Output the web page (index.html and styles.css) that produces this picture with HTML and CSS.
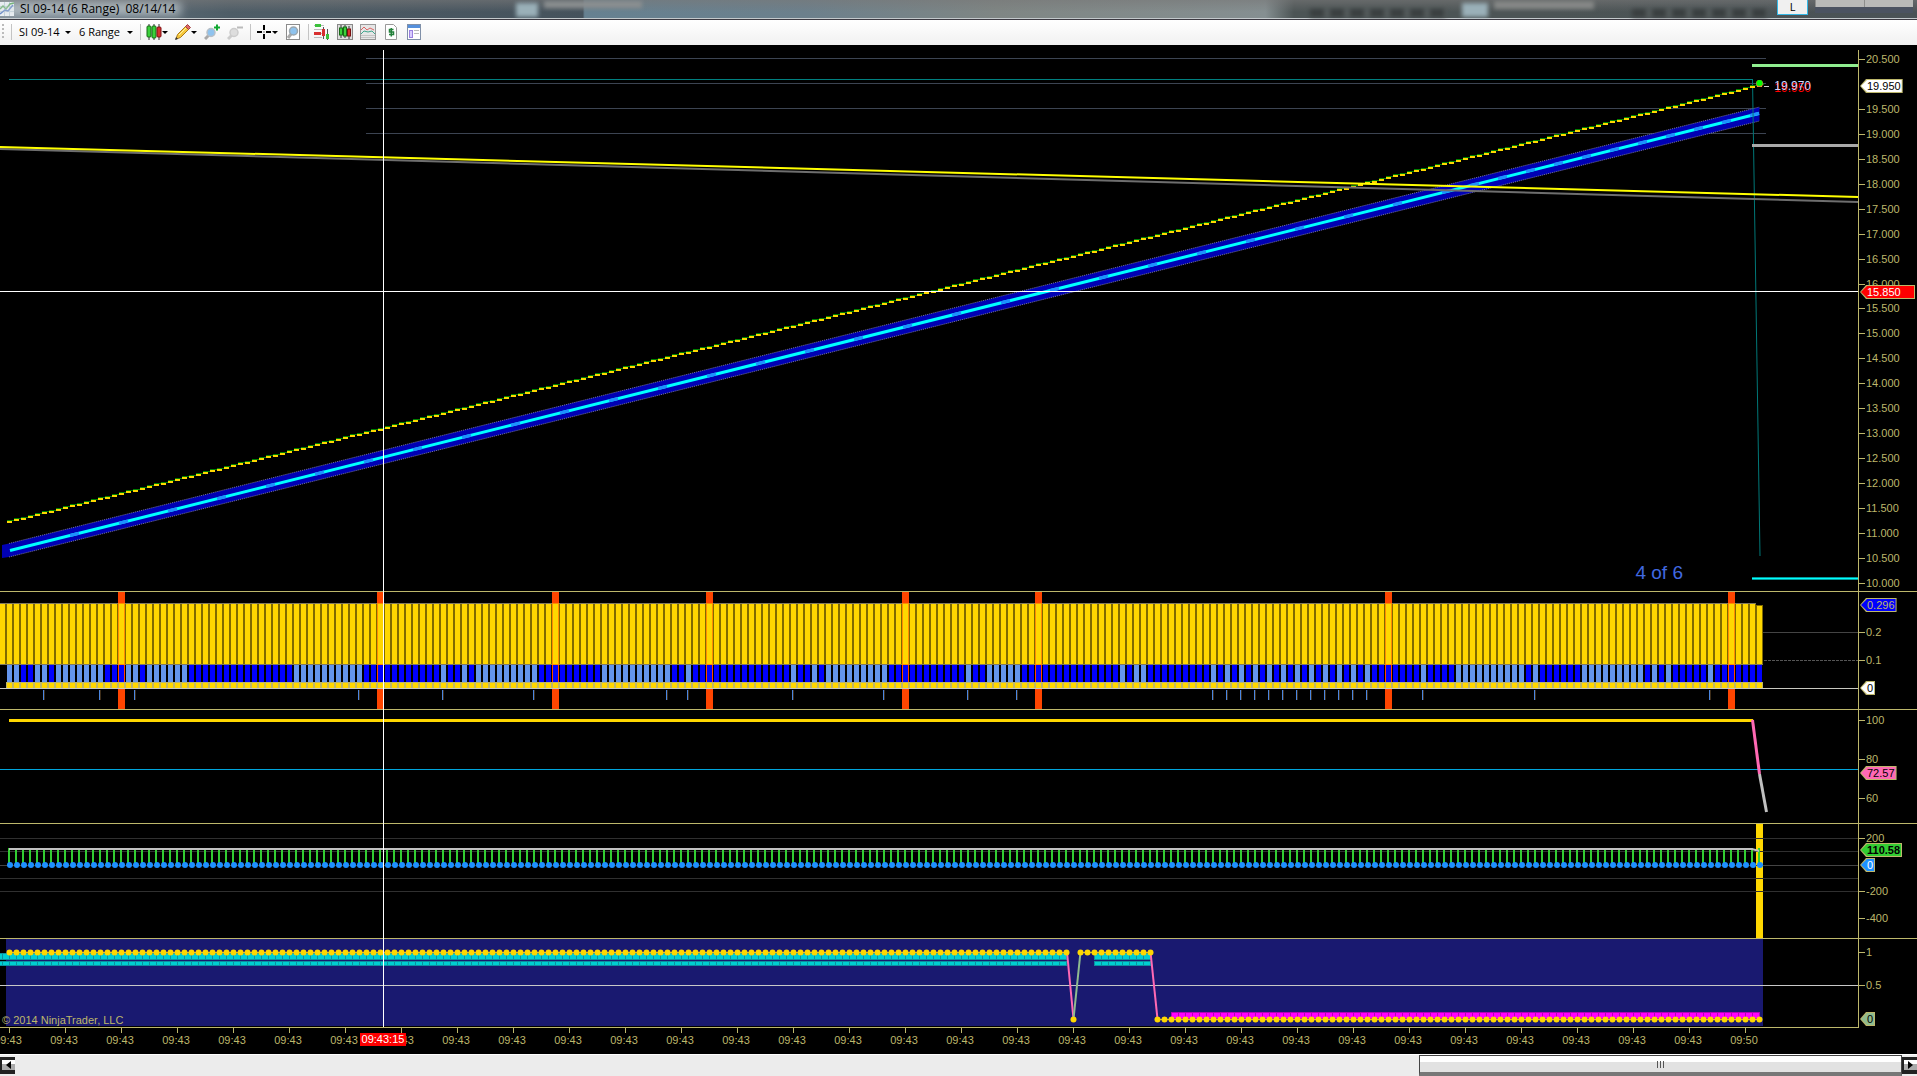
FILE: index.html
```html
<!DOCTYPE html>
<html lang="en">
<head>
  <meta charset="UTF-8">
  <meta name="viewport" content="width=device-width, initial-scale=1.0">
  <title>SI 09-14 (6 Range)  08/14/14</title>
  <link rel="stylesheet" href="styles.css">
</head>
<body>
  <header class="titlebar">
    <svg class="app-icon" viewBox="0 0 14 14"><rect width="14" height="14" fill="#f4f8fb"/><path d="M0 4.5h14M0 9.5h14M4.5 0v14M9.500 0v14" stroke="#b9cbd8"/><path d="M0 7l3-3 3 3 4-5 4-1" fill="none" stroke="#3a9a3a" stroke-width="1.5"/><path d="M0 12l5-4 3 1 5-6" fill="none" stroke="#2858b8" stroke-width="1.500"/></svg>
    <h1 class="title">SI 09-14 (6 Range)&nbsp; 08/14/14</h1>
    <span class="ghost ghost-a"></span>
    <span class="ghost ghost-b"></span>
    <span class="ghost ghost-c"></span>
    <span class="ghost ghost-d"></span>
    <span class="ghost ghost-e"></span>
    <span class="ghost ghost-f"></span>
    <button class="link-btn">L</button>
    <div class="win-buttons"><button aria-label="Minimize"></button><button aria-label="Close"></button></div>
  </header>

  <nav class="toolbar">
    <span class="grip"></span>
    <span class="sep"></span>
    <label class="picker instrument"><select aria-label="Instrument"><option>SI 09-14</option></select></label>
    <label class="picker period"><select aria-label="Period"><option>6 Range</option></select></label>
    <span class="sep"></span>
    <button class="tool drop" aria-label="Chart style"><svg viewBox="0 0 16 16"><path d="M3 0v16M8 0v16M13 0v16" stroke="#333"/><rect x="1" y="2" width="4" height="11" rx="1" fill="#3bd13b" stroke="#176a17"/><rect x="6" y="2" width="4" height="12" rx="1" fill="#3bd13b" stroke="#176a17"/><rect x="11" y="3" width="4" height="10" rx="1" fill="#d93030" stroke="#7a1010"/></svg></button>
    <button class="tool drop" aria-label="Drawing tools"><svg viewBox="0 0 16 16"><path d="M1 15l1.500-4.500L11 2l3 3-8.500 8.500z" fill="#f6c83c" stroke="#a87818"/><path d="M4 11l8-8" stroke="#fff0a0"/><path d="M10.500 2.500l2-2 3 3-2 2z" fill="#e06868" stroke="#a04040"/><path d="M0 16l1-3 2 2z" fill="#333"/></svg></button>
    <button class="tool" aria-label="Zoom in"><svg viewBox="0 0 16 16"><path d="M1 15l4-4" stroke="#a9a9a9" stroke-width="3"/><circle cx="7" cy="8.500" r="4" fill="#8fc3ee" stroke="#b7bfc6" stroke-width="1.500"/><path d="M10 3.500h6M13 .5v6" stroke="#12a832" stroke-width="2"/></svg></button>
    <button class="tool" aria-label="Zoom out"><svg viewBox="0 0 16 16"><path d="M1 15l4-4" stroke="#ccc" stroke-width="3"/><circle cx="7" cy="8.500" r="4" fill="#ddd" stroke="#ccc" stroke-width="1.500"/><path d="M10 3.500h6" stroke="#bbb" stroke-width="2"/></svg></button>
    <span class="sep"></span>
    <button class="tool drop" aria-label="Cross hair"><svg viewBox="0 0 16 16"><path d="M1 8h5M10 8h5M8 1v5M8 10v5" stroke="#000" stroke-width="2"/><path d="M7.500 8h1" stroke="#000"/></svg></button>
    <button class="tool" aria-label="Show data box"><svg viewBox="0 0 16 16"><rect x="1.500" y=".5" width="13" height="15" fill="#fff" stroke="#8c8c8c"/><path d="M3 14l3-4" stroke="#aaa" stroke-width="3"/><circle cx="8.500" cy="7" r="4" fill="#8fc3ee" stroke="#9aa6ae" stroke-width="1.500"/></svg></button>
    <span class="sep"></span>
    <button class="tool" aria-label="Chart trader"><svg viewBox="0 0 16 16"><path d="M0 1.500h10M0 5.500h8M0 9.500h9M0 13.500h8" stroke="#bbb"/><rect x="1" y="0" width="6" height="3" fill="#3bc13b"/><rect x="0" y="8" width="7" height="3" fill="#d83030"/><path d="M9.500 3v12M13.500 5v11" stroke="#555"/><rect x="8" y="5" width="3" height="7" fill="#d83030"/><rect x="12" y="10" width="3" height="5" fill="#3bc13b"/></svg></button>
    <button class="tool" aria-label="Data series"><svg viewBox="0 0 16 16"><rect x=".5" y=".5" width="15" height="15" fill="#ddd" stroke="#888"/><path d="M4 1v13M8 1v13M12 2v13" stroke="#333"/><rect x="2.500" y="4" width="3" height="7" fill="#3bd13b" stroke="#176a17"/><rect x="6.500" y="3" width="3" height="9" fill="#3bd13b" stroke="#176a17"/><rect x="10.500" y="5" width="3" height="7" fill="#d93030" stroke="#7a1010"/></svg></button>
    <button class="tool" aria-label="Indicators"><svg viewBox="0 0 16 16"><rect x=".5" y=".5" width="15" height="15" fill="#e6e6e6" stroke="#999"/><path d="M1 11.500h14M1 13.500h14" stroke="#c4c4c4"/><path d="M1 6l3-3 3 3 3-2 4 2" fill="none" stroke="#dc6464"/><path d="M1 10l3-3 4 1 4-1 3 3" fill="none" stroke="#3fa58c"/></svg></button>
    <button class="tool" aria-label="Strategies"><svg viewBox="0 0 16 16"><path d="M2.500.5h8l3 3v12h-11z" fill="#fff" stroke="#999"/><path d="M10.500 5.500h-4v2.500h4v2.500h-4.500M8.300 4v8.500" fill="none" stroke="#23803a" stroke-width="1.500"/></svg></button>
    <button class="tool" aria-label="Properties"><svg viewBox="0 0 16 16"><rect x="1.500" y=".5" width="13" height="15" fill="#fff" stroke="#8090a8"/><rect x="2" y="1" width="12" height="3" fill="#5590dc"/><rect x="3.500" y="6.500" width="3" height="7" fill="#d9ccff" stroke="#9a80e0"/><path d="M8 6.500h5M8 9.500h5" stroke="#bbb"/></svg></button>
  </nav>

  <main class="chart">
    <section class="pane" id="price" data-top="45" data-height="546">
      <svg class="plot" viewBox="0 45 1858 546" preserveAspectRatio="none"></svg>
      <div class="axis"></div>
      <span class="last-shadow">19.950</span>
      <span class="last">19.970</span>
      <span class="counter">4 of 6</span>
    </section>
    <section class="pane" id="bars" data-top="592" data-height="117">
      <svg class="plot" viewBox="0 592 1858 117" preserveAspectRatio="none"></svg>
      <div class="axis"></div>
    </section>
    <section class="pane" id="percent" data-top="710" data-height="113">
      <svg class="plot" viewBox="0 710 1858 113" preserveAspectRatio="none"></svg>
      <div class="axis"></div>
    </section>
    <section class="pane" id="cci" data-top="824" data-height="114">
      <svg class="plot" viewBox="0 824 1858 114" preserveAspectRatio="none"></svg>
      <div class="axis"></div>
    </section>
    <section class="pane" id="state" data-top="939" data-height="88">
      <svg class="plot" viewBox="0 939 1858 88" preserveAspectRatio="none"></svg>
      <div class="axis"></div>
      <span class="copyright">© 2014 NinjaTrader, LLC</span>
    </section>
    <div class="time-axis" id="times"></div>
    <span class="cursor-line"></span>
  </main>

  <footer class="scrollbar">
    <button class="arrow" aria-label="Scroll left"><svg viewBox="0 0 5 8"><path d="M5 0v8L0 4z"/></svg></button>
    <div class="track"><div class="thumb"><i></i><i></i><i></i></div></div>
    <button class="arrow" aria-label="Scroll right"><svg viewBox="0 0 5 8"><path d="M0 0v8l5-4z"/></svg></button>
  </footer>

  <script src="chart.js"></script>
</body>
</html>
```
FILE: styles.css
```css
* { box-sizing: border-box; }
body { margin: 0; height: 100vh; display: flex; flex-direction: column; overflow: hidden; background: #000; font-family: "Liberation Sans", Arial, sans-serif; font-size: 11px; }
button { padding: 0; border: none; background: none; font: inherit; }

/* title bar */
.titlebar { position: relative; flex: none; height: 20px; display: flex; align-items: flex-start; overflow: hidden; border-bottom: 1px solid #3c3a42; box-shadow: inset 0 -1px #c3c9cc; background: linear-gradient(rgba(120,120,120,.6), rgba(120,120,120,0) 12px), linear-gradient(90deg, #6f7e89 0, #4e5d67 12%, #45525c 30.400%, #668191 30.500%, #6c808c 42%, #7f8684 52%, #858f91 66%, #4c5455 67.500%, #4c5455 80%, #4a5256 100%); }
.app-icon { width: 14px; height: 14px; margin-top: 2px; position: relative; z-index: 1; }
.title { position: relative; z-index: 1; margin: 0 0 0 6px; font: 12px/18px "Open Sans", "Noto Sans", sans-serif; color: #000; }
.title::before { content: ""; position: absolute; z-index: -1; inset: 2px -6px 2px -24px; background: rgba(210,218,222,.65); filter: blur(5px); }
.ghost { position: absolute; top: 3px; height: 14px; filter: blur(2px); }
.ghost-a { left: 516px; width: 22px; background: #9ab0b8; }
.ghost-b { left: 544px; width: 98px; top: 1px; height: 7px; background: #8b8f90; }
.ghost-c { left: 1462px; width: 26px; background: #9ab0b8; }
.ghost-d { left: 1494px; width: 100px; top: 1px; height: 8px; background: #868887; }
.ghost-e { left: 1310px; width: 136px; top: 9px; height: 8px; background: repeating-linear-gradient(90deg, #3a3f40 0 14px, #555c5d 14px 20px); }
.ghost-f { left: 1632px; width: 136px; top: 9px; height: 8px; background: repeating-linear-gradient(90deg, #3a3f40 0 14px, #555c5d 14px 20px); }
.link-btn { width: 31px; height: 15px; margin-left: auto; border: 1px solid #35b8e6; border-top: none; background: #f0f0f0; font: 11px/12px "Open Sans", sans-serif; }
.win-buttons { display: flex; width: 98px; height: 13px; margin: 0 4px 0 7px; border-bottom: 6px solid #4b5361; background: #b9bab8; }
.win-buttons button { flex: 1; border-left: 1px solid #8d8e8c; }

/* toolbar */
.toolbar { flex: none; height: 25px; display: flex; align-items: center; padding: 0 2px 2px; background: linear-gradient(#fff, #f1f1f1); font-family: "Open Sans", "Noto Sans", sans-serif; }
.grip { width: 2px; height: 16px; margin-right: 3px; background: repeating-linear-gradient(#bbb 0 2px, transparent 2px 4px); }
.sep { width: 1px; height: 16px; margin: 0 1px 0 4px; background: #c4c4c4; }
.picker { position: relative; height: 20px; }
.picker select { width: 100%; height: 20px; padding: 0; border: none; background: none; appearance: none; font: inherit; color: #000; }
.instrument { width: 60px; margin-left: 6px; }
.period { width: 54px; margin-right: 3px; }
.picker::after, .drop::after { content: ""; position: absolute; right: 8px; top: 9px; border: 3px solid transparent; border-top-color: #000; border-bottom: none; }
.tool { position: relative; margin: 0 3px 0 4px; }
.tool svg { display: block; width: 16px; height: 16px; }
.drop { width: 22px; text-align: left; }
.drop::after { top: 7px; }
.period::after, .drop::after { right: 0; }

/* chart */
.chart { position: relative; flex: 1; min-height: 0; display: grid; grid-template-rows: 547fr 118fr 114fr 115fr 89fr 26px; color: #bdb76b; }
.pane { position: relative; min-height: 0; display: grid; grid-template-columns: 1fr 59px; grid-template-rows: 100%; border-bottom: 1px solid #bdb76b; }
#state { border-bottom-color: #000; }
#state::after { content: ""; position: absolute; left: 0; right: 58px; bottom: -1px; height: 1px; background: #bdb76b; }
.plot { display: block; width: 100%; height: 100%; }
.plot rect { shape-rendering: crispEdges; }
.axis { position: relative; border-left: 1px solid #bdb76b; }
#price .axis { margin-top: 5px; }
.label { position: absolute; left: 7px; height: 12px; margin-top: -6px; line-height: 13px; }
.label::before { content: ""; position: absolute; left: -7px; top: 6px; width: 6px; height: 1px; background: #bdb76b; }
.tag { position: absolute; left: 1px; height: 14px; margin-top: -7px; padding: 0 2px 0 7px; line-height: 14px; isolation: isolate; background: #bdb76b; clip-path: polygon(0 50%, 6px 0, 100% 0, 100% 100%, 6px 100%); }
.tag::before { content: ""; position: absolute; z-index: -1; inset: 1px; clip-path: polygon(0 50%, 6px 0, 100% 0, 100% 100%, 6px 100%); }
.tag.white { color: #000; }
.tag.white::before { background: #fff; }
.tag.red { color: #fff; right: 2px; }
.tag.red::before { background: #f00; }
.tag.blue::before { background: #00f; }
.tag.pink { color: #000; }
.tag.pink::before { background: #ff69b4; }
.tag.green { color: #000; font-weight: bold; }
.tag.green::before { background: #32cd32; }
.tag.sky { color: #fff; }
.tag.sky::before { background: #1e90ff; }
.tag.sage { color: #000; }
.tag.sage::before { background: #8fbc8f; }
.last, .last-shadow { position: absolute; top: 35px; right: 106px; line-height: 13px; font-size: 12px; color: #d0d8ff; }
.last-shadow { top: 37px; color: #f00; }
.counter { position: absolute; right: 234px; bottom: 7px; font-size: 19px; line-height: 22px; color: #4169e1; }
.copyright { position: absolute; left: 2px; bottom: 0; line-height: 13px; }
.time-axis { position: relative; margin-right: 59px; }
.time { position: absolute; top: 6px; width: 56px; margin-left: -29px; line-height: 13px; text-align: center; }
.time::before { content: ""; position: absolute; left: 29px; top: -6px; width: 1px; height: 5px; background: #bdb76b; }
.time-cursor { position: absolute; top: 5px; width: 46px; margin-left: -23px; background: #f00; color: #fff; line-height: 13px; text-align: center; }
.cursor-line { position: absolute; left: 20%; top: 5px; bottom: 27px; width: 1px; background: #fff; }

/* scrollbar */
.scrollbar { flex: none; height: 22px; display: flex; background: #ececec; border-top: 1px solid #fff; }
.arrow { width: 15px; margin: 2px 0; display: grid; place-items: center; border: 2px solid #222; border-width: 3px 0 4px 2px; background: linear-gradient(#fff 4px, #aaa 4px); }
.arrow svg { width: 5px; height: 8px; }
.track { flex: 1; display: flex; justify-content: flex-end; }
.thumb { width: 25.600%; height: 21px; display: flex; align-items: center; justify-content: center; gap: 2px; border: 1px solid #444; border-bottom: 4px solid #777; background: linear-gradient(#fff 6px, #e2e2e2 6px); }
.thumb i { width: 1px; height: 7px; background: #555; }
```
FILE: chart.js
```js
const plots = {};
document.querySelectorAll(".pane").forEach(p => plots[p.id] = "");

function rect(id, x, y, w, h, fill) {
  plots[id] += `<rect x="${x}" y="${y}" width="${w}" height="${h}" fill="${fill}"/>`;
}
function line(id, points, color, width, extra) {
  plots[id] += `<polyline points="${points}" fill="none" stroke="${color}" stroke-width="${width || 1}" ${extra || ""}/>`;
}
function dot(id, x, y, r, fill) {
  plots[id] += `<circle cx="${x}" cy="${y}" r="${r}" fill="${fill}"/>`;
}

const BARS = 251;
const barX = n => 7 + n * 7;

// price
[58, 83, 108, 133].forEach(y => rect("price", 366, y, 1400, 1, "#3c4452"));
plots.price += '<polygon points="2,545 9,543.500 1759.500,107 1759.500,121 9,557 2,558" fill="#0000b4"/>';
line("price", "9,543.500 1759.500,107", "#77779a", 1, 'stroke-dasharray="1 1"');
line("price", "9,557 1759.500,121", "#77779a", 1, 'stroke-dasharray="1 1"');
line("price", "10,550.500 1759,113.500", "#00ffff", 3);
for (let n = 9; n < BARS - 1; n += n > 200 ? 4 : 7) {
  const x = barX(n), y = 550.5 - (x - 10) * 0.25;
  line("price", `${x},${y} ${x + 9},${y - 2.25}`, "#1e90ff", 3);
}
rect("price", 9, 79, 1744, 1, "#008080");
line("price", "1752.500,79 1760,556", "#007878", 1);
for (let n = 0; n < BARS; n++) {
  const y = Math.round(521 - n * 1.745);
  rect("price", barX(n), y, 5, 2, "#ffd700");
  rect("price", barX(n), y - 1, 7, 1, "#008000");
}
line("price", "0,149 1858,202", "#6e6e6e", 2);
line("price", "0,147 1858,197", "#ffff00", 2);
rect("price", 1752, 64, 106, 3, "#90ee90");
rect("price", 1752, 144, 106, 3, "#a9a9a9");
rect("price", 1752, 577, 106, 3, "#009c9c");
rect("price", 1752, 578, 106, 1, "#00ffff");
dot("price", 1759.5, 83.5, 3.5, "#cd853f");
dot("price", 1759.5, 83, 3, "#00ff00");
rect("price", 1764, 86, 5, 1, "#ccc");
rect("price", 0, 291, 1858, 1, "#fff");

// momentum bars, "l" light and "d" dark, run lengths
const runs = "2l2d2l1d7l3d2l1d6l15d10l11d1l2d1l1d9l9d10l2d1l14d1l2d1l1d9l11d1l2d5l14d1l1d2l9d" +
  "1l1d".repeat(11) + "1l7d1l4d10l1d1l6d9l1d1l1d1l5d1l7d";
const shades = runs.replace(/(\d+)([ld])/g, (m, count, c) => c.repeat(count));
const signals = [16, 53, 78, 100, 128, 147, 197, 246];
const ticks = [5, 13, 18, 50, 62, 75, 94, 97, 112, 125, 137, 144, 172, 174, 176, 178, 180, 182, 184, 186, 188, 190, 192, 194, 202, 218, 243];

rect("bars", 0, 632, 1858, 1, "#444");
line("bars", "0,660.500 1858,660.500", "#555", 1, 'stroke-dasharray="3 1"');
rect("bars", 0, 603, 1756, 62, "#806b00");
rect("bars", 1756, 605, 7, 60, "#806b00");
rect("bars", 0, 603, 1756, 1, "#807a60");
rect("bars", 0, 664, 1763, 1, "#807a60");
signals.forEach(n => rect("bars", barX(n) - 1, 592, 7, 117, "#ff4500"));
signals.forEach(n => rect("bars", barX(n) - 1, 603, 7, 62, "#ff8c00"));
rect("bars", 0, 604, 5, 60, "#ffd700");
rect("bars", 6, 682, 1757, 7, "#bdb76b");
for (let n = 0; n < BARS; n++) {
  const top = n == 250 ? 606 : 604;
  rect("bars", barX(n), top, 5, 664 - top, "#ffd700");
  rect("bars", barX(n), 665, 5, 17, shades[n] == "l" ? "#6495ed" : "#0000ff");
  rect("bars", barX(n), 683, 5, 5, "#ffd700");
}
rect("bars", 0, 688, 1858, 1, "#c8c8c0");
ticks.forEach(n => {
  rect("bars", barX(n) + 1, 690, 1, 10, "#4a86e0");
  rect("bars", barX(n) + 2, 690, 1, 10, "#3c2c18");
});

// percent line
rect("percent", 0, 769, 1858, 1, "#00a5dc");
rect("percent", 9, 719, 1744, 3, "#ffd700");
line("percent", "1752.500,720 1759.500,774", "#ff69b4", 3);
line("percent", "1759.500,774 1766.500,812", "#c0c0c0", 3);

// cci
rect("cci", 1756, 824, 7, 114, "#ffd700");
[838, 851, 865, 878, 891].forEach(y => rect("cci", 0, y, 1858, 1, y == 865 ? "#444" : "#303030"));
for (let n = 0; n < BARS; n++) {
  rect("cci", barX(n) + 1, 848, 2, 16, "#32cd32");
  dot("cci", barX(n) + 3, 865, 3, "#1e90ff");
}
line("cci", "9,849 1752,849 1759,851", "#c0c0c0", 2);

// state
rect("state", 6, 939, 1757, 87, "#191970");
function band(x1, x2, y, h, fill, edge) {
  rect("state", x1, y, x2 - x1, h, edge);
  rect("state", x1, y + 1, x2 - x1, h - 2, fill);
  for (let x = x1 + (9 - x1 % 7) % 7; x < x2; x += 7) rect("state", x, y, 1, h, edge);
}
[[0, 1067], [1094, 1151]].forEach(b => {
  band(b[0], b[1], 953, 7, "#00ced1", "#0d8fa0");
  band(b[0], b[1], 961, 5, "#00ced1", "#0d8fa0");
});
band(1171, 1760, 1012, 7, "#ff00ff", "#b400b8");
rect("state", 0, 985, 1858, 1, "#c8c8c8");
line("state", "1067,952 1073.500,1019", "#ff69b4", 2);
line("state", "1073.500,1019 1080.500,952", "#8fbc8f", 2);
line("state", "1150.500,952 1157.500,1019", "#ff69b4", 2);
line("state", "9,952.500 1067,952.500", "#c8b450", 1);
line("state", "1080,952.500 1151,952.500", "#c8b450", 1);
line("state", "1157,1019.500 1760,1019.500", "#c8b450", 1);
for (let n = 0; n < BARS; n++) {
  const low = n == 152 || n > 163;
  dot("state", barX(n) + 2.5, low ? 1019.5 : 952.5, 3, "#ffd700");
}

// axis labels: [text, y, tag colour]
const labels = { price: [], bars: [["0.296", 605, "blue"], ["0.2", 632], ["0.1", 660], ["0", 688, "white"]],
  percent: [["100", 720], ["80", 759], ["60", 798], ["72.57", 773, "pink"]],
  cci: [["200", 838], ["-200", 891], ["-400", 918], ["110.58", 850, "green"], ["0", 865, "sky"]],
  state: [["1", 952], ["0.5", 985], ["0", 1019, "sage"]] };
for (let p = 20.5, y = 59; p >= 10; p -= 0.5, y += 24.95) {
  if (p != 20) labels.price.push([p.toFixed(3), Math.round(y)]);
}
labels.price.push(["19.950", 86, "white"], ["15.850", 292, "red"]);

document.querySelectorAll(".pane").forEach(pane => {
  pane.querySelector(".plot").innerHTML = plots[pane.id];
  const inset = pane.id == "price" ? 5 : 0;
  const top = +pane.dataset.top + inset, height = pane.dataset.height - inset;
  pane.querySelector(".axis").innerHTML = labels[pane.id].map(l =>
    `<span class="${l[2] ? "tag " + l[2] : "label"}" style="top:${(l[1] - top) / height * 100}%">${l[0]}</span>`).join("");
});

let times = "";
for (let k = 0; k < 32; k++) {
  times += `<span class="time" style="left:${(9 + 56 * k) / 1858 * 100}%">${k == 31 ? "09:50" : "09:43"}</span>`;
}
times += `<span class="time-cursor" style="left:${383 / 1858 * 100}%">09:43:15</span>`;
document.getElementById("times").innerHTML = times;
```
